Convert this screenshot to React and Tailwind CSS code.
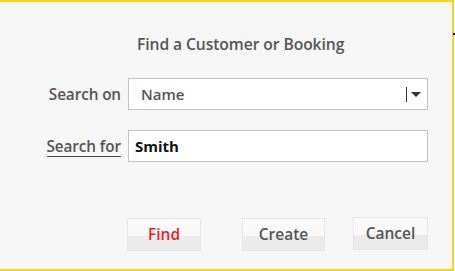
import React from "react";

const font = { fontFamily: '"Open Sans", "Noto Sans", sans-serif' };

function DialogButton({ label, className = "", textClass = "text-[#555]" }) {
  return (
    <button
      className={`h-[33px] border border-[#e6e6e6] bg-[linear-gradient(to_bottom,#f9f9f9_0%,#f9f9f9_55%,#ebebeb_55%,#ebebeb_100%)] text-[15.5px] font-semibold ${textClass} ${className}`}
    >
      {label}
    </button>
  );
}

export default function App() {
  return (
    <div className="w-[455px] h-[271px] bg-white relative" style={font}>
      <div className="w-[454px] h-[271px] bg-[#f6f6f6] border-t-2 border-r-2 border-b-2 border-[#f7d51d] flex flex-col">
        {/* Title */}
        <div className="pt-[32px] pl-[137px] text-[15.7px] font-semibold text-[#555] leading-[21px] tracking-[-0.1px]">
          Find a Customer or Booking
        </div>

        {/* Search on */}
        <div className="flex items-center mt-[23px]">
          <div className="w-[121px] text-right text-[15.3px] font-semibold text-[#555] tracking-[-0.1px]">Search on</div>
          <div className="ml-[7px] w-[300px] h-[32px] bg-white border border-[#c4c4c4] flex items-center pl-[12px] pr-[6px]">
            <span className="flex-1 text-[15px] font-semibold text-[#555]">Name</span>
            <span className="w-[1px] h-[15px] bg-[#333] mr-[4px]" />
            <span className="w-0 h-0 border-l-[5px] border-r-[5px] border-t-[5px] border-l-transparent border-r-transparent border-t-[#333]" />
          </div>
        </div>

        {/* Search for */}
        <div className="flex items-center mt-[20px]">
          <div className="w-[121px] flex justify-end">
            <span className="text-[15.3px] font-semibold text-[#555] border-b border-[#444] leading-[19px] tracking-[-0.1px] mt-[1px]">Search for</span>
          </div>
          <div className="ml-[7px] w-[300px] h-[32px] bg-white border border-[#c4c4c4] flex items-center pl-[6px]">
            <span className="text-[15px] font-bold text-[#111]">Smith</span>
          </div>
        </div>

        {/* Buttons */}
        <div className="flex items-start mt-[56px]">
          <DialogButton label="Find" className="ml-[127px] w-[74px]" textClass="text-[#f51a1a]" />
          <DialogButton label="Create" className="ml-[41px] w-[83px]" />
          <DialogButton label="Cancel" className="ml-[28px] w-[75px] -mt-[1px] h-[32px]" />
        </div>
      </div>
      <span className="absolute right-0 top-[33px] w-[2px] h-[2px] bg-black" />
    </div>
  );
}
